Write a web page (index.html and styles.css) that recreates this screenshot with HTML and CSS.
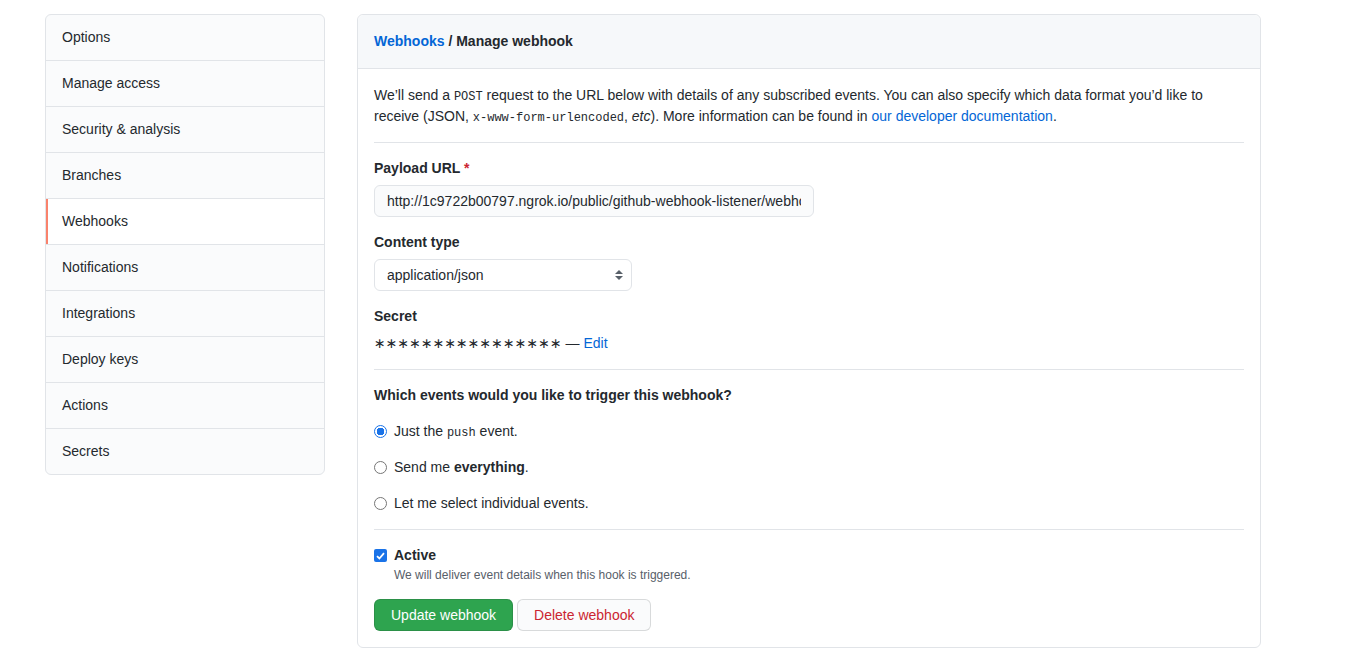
FILE: index.html
```html
<!DOCTYPE html>
<html lang="en">
<head>
<meta charset="utf-8">
<title>Manage webhook</title>
<link rel="stylesheet" href="styles.css">
</head>
<body>
<div class="layout">
  <nav class="menu">
    <a class="menu-item" href="#">Options</a>
    <a class="menu-item" href="#">Manage access</a>
    <a class="menu-item" href="#">Security &amp; analysis</a>
    <a class="menu-item" href="#">Branches</a>
    <a class="menu-item selected" href="#">Webhooks</a>
    <a class="menu-item" href="#">Notifications</a>
    <a class="menu-item" href="#">Integrations</a>
    <a class="menu-item" href="#">Deploy keys</a>
    <a class="menu-item" href="#">Actions</a>
    <a class="menu-item last" href="#">Secrets</a>
  </nav>

  <div class="box">
    <div class="box-header">
      <a class="link" href="#">Webhooks</a> / Manage webhook
    </div>
    <div class="box-body">
      <p class="intro">We’ll send a <code>POST</code> request to the URL below with details of any subscribed events. You can also specify which data format you’d like to receive (JSON, <code>x-www-form-urlencoded</code>, <em>etc</em>). More information can be found in <a class="link-plain" href="#">our developer documentation</a>.</p>

      <div class="form-group first">
        <label class="label">Payload URL <span class="req">*</span></label>
        <div class="input"><span class="input-text">http://1c9722b00797.ngrok.io/public/github-webhook-listener/webhook</span></div>
      </div>

      <div class="form-group">
        <label class="label">Content type</label>
        <div class="select">
          <span>application/json</span>
          <svg class="arrows" width="8" height="10" viewBox="0 0 8 10"><path d="M4 0 L8 4 H0 Z M4 10 L0 6 H8 Z" fill="#586069"/></svg>
        </div>
      </div>

      <div class="form-group secret-group">
        <label class="label">Secret</label>
        <div class="secret"><span class="stars">∗∗∗∗∗∗∗∗∗∗∗∗∗∗∗∗</span> — <a class="link-plain" href="#">Edit</a></div>
      </div>

      <div class="section">
        <div class="label">Which events would you like to trigger this webhook?</div>
        <div class="radio-row first-radio"><span class="radio checked"></span><span>Just the <code>push</code> event.</span></div>
        <div class="radio-row"><span class="radio"></span><span>Send me <strong>everything</strong>.</span></div>
        <div class="radio-row"><span class="radio"></span><span>Let me select individual events.</span></div>
      </div>

      <div class="section last-section">
        <div class="check-row">
          <span class="checkbox">
            <svg width="9" height="8" viewBox="0 0 9 8"><path d="M1 4.2 L3.4 6.5 L8 1.2" fill="none" stroke="#fff" stroke-width="1.8"/></svg>
          </span>
          <strong class="check-label">Active</strong>
        </div>
        <div class="note">We will deliver event details when this hook is triggered.</div>
        <div class="buttons">
          <button class="btn btn-primary">Update webhook</button>
          <button class="btn btn-danger">Delete webhook</button>
        </div>
      </div>
    </div>
  </div>
</div>
</body>
</html>
```
FILE: styles.css
```css
* { box-sizing: border-box; }

body {
  margin: 0;
  background: #fff;
  color: #24292e;
  font-family: "Liberation Sans", Arial, sans-serif;
  font-size: 14px;
  line-height: 21px;
}

.layout {
  display: flex;
  align-items: flex-start;
  gap: 32px;
  padding: 14px 0 0 45px;
}

.menu {
  width: 280px;
  display: flex;
  flex-direction: column;
  background: #fafbfc;
  border: 1px solid #e1e4e8;
  border-radius: 6px;
  overflow: hidden;
}

.menu-item {
  display: block;
  padding: 12px 16px;
  height: 46px;
  color: #24292e;
  text-decoration: none;
  border-bottom: 1px solid #e1e4e8;
}

.menu-item.last { border-bottom: 0; height: 45px; }

.menu-item.selected {
  background: #fff;
  box-shadow: inset 2px 0 0 #f9826c;
}

.box {
  width: 904px;
  border: 1px solid #e1e4e8;
  border-radius: 6px;
}

.box-header {
  background: #f6f8fa;
  padding: 16px;
  border-bottom: 1px solid #e1e4e8;
  border-radius: 6px 6px 0 0;
  font-weight: bold;
  height: 54px;
}

.link { color: #0366d6; text-decoration: none; }
.link-plain { color: #0366d6; text-decoration: none; }

.box-body { padding: 16px; }

.intro {
  margin: 0;
  padding-bottom: 15px;
  border-bottom: 1px solid #e1e4e8;
}

code {
  font-family: "Liberation Mono", "DejaVu Sans Mono", monospace;
  font-size: 12px;
  line-height: 1;
}

.form-group { margin-top: 15px; }

.label {
  display: block;
  font-weight: bold;
  margin-bottom: 6px;
}

.req { color: #cb2431; }

.input {
  width: 440px;
  height: 32px;
  padding: 5px 12px;
  background: #fafbfc;
  border: 1px solid #e1e4e8;
  border-radius: 6px;
}

.input-text {
  display: block;
  white-space: nowrap;
  overflow: hidden;
}

.select {
  width: 258px;
  height: 32px;
  padding: 5px 12px;
  background: #fff;
  border: 1px solid #e1e4e8;
  border-radius: 6px;
  display: flex;
  align-items: center;
  justify-content: space-between;
}

.arrows { margin-right: -4px; }

.secret-group { margin-top: 15px; }
.secret-group .label { margin-bottom: 6px; }

.secret {
  padding-bottom: 15px;
  border-bottom: 1px solid #e1e4e8;
}

.stars {
  font-family: "DejaVu Sans", sans-serif;
  line-height: 1;
}

.section {
  padding-top: 15px;
  padding-bottom: 15px;
  border-bottom: 1px solid #e1e4e8;
}

.section .label { margin-bottom: 0; }

.radio-row {
  display: flex;
  align-items: center;
  gap: 7px;
  margin-top: 15px;
}

.radio {
  width: 13px;
  height: 13px;
  border: 1px solid #767676;
  border-radius: 50%;
  flex: none;
  background: #fff;
}

.radio.checked {
  border: 1px solid #1a73e8;
  background: radial-gradient(circle, #1a73e8 0 3.6px, #fff 4px);
}

.last-section { border-bottom: 0; padding-bottom: 0; }

.check-row {
  display: flex;
  align-items: center;
  gap: 7px;
}

.checkbox {
  width: 13px;
  height: 13px;
  border-radius: 2px;
  background: #1a73e8;
  display: flex;
  align-items: center;
  justify-content: center;
  flex: none;
}

.note {
  font-size: 12px;
  line-height: 18px;
  color: #586069;
  padding-left: 20px;
}

.buttons {
  display: flex;
  gap: 4px;
  margin-top: 15px;
}

.btn {
  height: 32px;
  padding: 5px 16px;
  font-family: "Liberation Sans", Arial, sans-serif;
  font-size: 14px;
  line-height: 20px;
  border-radius: 6px;
  cursor: pointer;
}

.btn-primary {
  background: #2ea44f;
  color: #fff;
  border: 1px solid rgba(27, 31, 35, 0.15);
}

.btn-danger {
  background: #fafbfc;
  color: #cb2431;
  border: 1px solid rgba(27, 31, 35, 0.15);
}
```
